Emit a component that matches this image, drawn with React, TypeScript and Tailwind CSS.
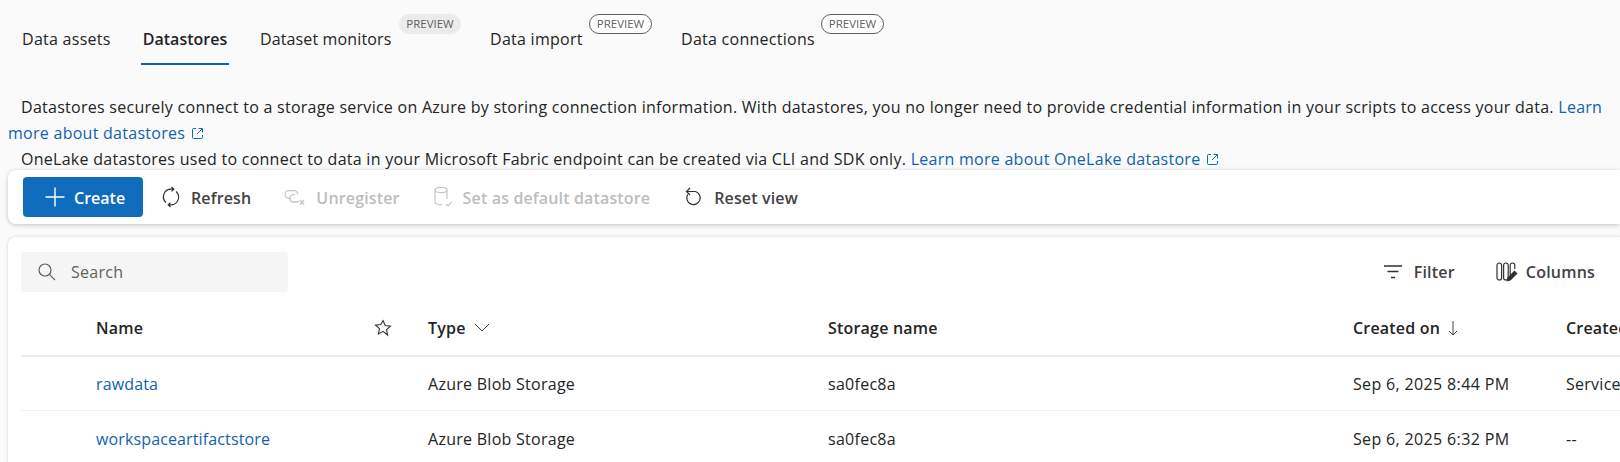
const font = "font-['Open_Sans','Noto_Sans',sans-serif]";

function PlusIcon() {
  return (
    <svg width="22" height="22" viewBox="0 0 22 22" fill="none" stroke="#fff" strokeWidth="1.4">
      <path d="M11 1.5v19M1.5 11h19" />
    </svg>
  );
}

function RefreshIcon() {
  return (
    <svg width="20" height="22" viewBox="0 0 20 22" fill="none" stroke="#323130" strokeWidth="1.2">
      <path d="M5 16.5A7.6 7.6 0 0 1 10 3.2h2.5M10.5 1l2.3 2.2-2.3 2.2" />
      <path d="M15 5.5A7.6 7.6 0 0 1 10 18.8H7.5M9.5 16.6l-2.3 2.2 2.3 2.2" />
    </svg>
  );
}

function UnregisterIcon() {
  return (
    <svg width="22" height="20" viewBox="0 0 22 20" fill="none" stroke="#c8c6c4" strokeWidth="1.3">
      <path d="M7 11.4H5a3.9 3.9 0 0 1 0-7.8h4.8a3.9 3.9 0 0 1 3.9 3.9" />
      <path d="M10.5 7.6H9.4a3.7 3.7 0 0 0 0 7.4h3.2c1 0 1.9-.4 2.6-1.1" />
      <path d="M16 13l4 4.5M20 13l-4 4.5" />
    </svg>
  );
}

function DatabaseCheckIcon() {
  return (
    <svg width="20" height="22" viewBox="0 0 20 22" fill="none" stroke="#c8c6c4" strokeWidth="1.2">
      <ellipse cx="8" cy="4" rx="6" ry="2.6" />
      <path d="M2 4v12c0 1.6 2.6 2.7 6 2.7h1M14 4v9" />
      <path d="M13 18l2 2 3.6-4" />
    </svg>
  );
}

function ResetIcon() {
  return (
    <svg width="20" height="20" viewBox="0 0 20 20" fill="none" stroke="#323130" strokeWidth="1.2">
      <path d="M3 4.5h8.5a6.7 6.7 0 1 1-7.8 3" />
      <path d="M6 1L2.5 4.5 6 8" />
    </svg>
  );
}

function SearchIcon() {
  return (
    <svg width="20" height="20" viewBox="0 0 20 20" fill="none" stroke="#605e5c" strokeWidth="1.2">
      <circle cx="8" cy="8" r="6" />
      <path d="M12.4 12.4l5.6 5.8" />
    </svg>
  );
}

function FilterIcon() {
  return (
    <svg width="18" height="14" viewBox="0 0 18 14" fill="none" stroke="#323130" strokeWidth="1.3">
      <path d="M0 1h18M3.5 6.5h11M7 12.5h4" />
    </svg>
  );
}

function ColumnsIcon() {
  return (
    <svg width="22" height="22" viewBox="0 0 22 22" fill="none" stroke="#323130" strokeWidth="1.2">
      <rect x="1" y="2" width="4.6" height="17" rx="2.3" />
      <rect x="7.6" y="2" width="4.6" height="17" rx="2.3" />
      <path d="M14.2 14V4.3a2.3 2.3 0 0 1 4.6 0V8" />
      <path d="M10.5 20.5l1-4 7-7 3 3-7 7z" fill="#323130" stroke="none" />
    </svg>
  );
}

function ExternalIcon() {
  return (
    <svg className="inline-block ml-1.5 align-[-1px]" width="13" height="13" viewBox="0 0 13 13" fill="none" stroke="#0f6cbd" strokeWidth="1">
      <path d="M5 1.5H2.5a1 1 0 0 0-1 1v8a1 1 0 0 0 1 1h8a1 1 0 0 0 1-1V8M7.5 1.5h4v4M11.3 1.7L6 7" />
    </svg>
  );
}

function StarIcon() {
  return (
    <svg width="18" height="18" viewBox="0 0 18 18" fill="none" stroke="#323130" strokeWidth="1.1">
      <path d="M9 1.6l2.2 4.9 5.3.6-4 3.6 1.1 5.3L9 12.3l-4.6 2.7 1.1-5.3-4-3.6 5.3-.6z" />
    </svg>
  );
}

function Preview({ filled }: { filled?: boolean }) {
  return (
    <span
      className={
        filled
          ? "ml-[7px] mt-[14px] h-5 w-[62px] flex items-center justify-center rounded-full bg-[#ebebeb] text-[11.5px] tracking-normal text-[#616161]"
          : "ml-[6px] mt-[14px] h-5 w-[63px] flex items-center justify-center rounded-full border border-[#616161] bg-white text-[11.5px] tracking-normal text-[#616161]"
      }
    >
      PREVIEW
    </span>
  );
}

function ToolButton({ icon, label, disabled, className }: { icon: React.ReactNode; label: string; disabled?: boolean; className?: string }) {
  return (
    <div className={`flex items-center gap-[10px] text-[16px] tracking-[0.15px] font-semibold ${disabled ? "text-[#bdbdbd]" : "text-[#424242]"} ${className ?? ""}`}>
      {icon}
      <span className="pt-px">{label}</span>
    </div>
  );
}

const columns = "grid grid-cols-[332px_400px_525px_213px_200px] pl-[75px] w-[1800px]";

function Row({ name, created, by, last, height }: { name: string; created: string; by: string; last?: boolean; height: string }) {
  return (
    <div className={`${columns} ${height} items-center ${last ? "" : "border-b border-[#f0f0f0]"}`}>
      <a className="text-[#1062b0] tracking-[0.13px]">{name}</a>
      <span>Azure Blob Storage</span>
      <span>sa0fec8a</span>
      <span className="tracking-[0.35px]">{created}</span>
      <span>{by}</span>
    </div>
  );
}

export default function App() {
  return (
    <div className={`${font} w-[1620px] h-[462px] overflow-hidden bg-[#fafafa] text-[16px] tracking-[0.27px] text-[#242424]`}>
      <nav className="flex items-start h-[65px]">
        <div className="ml-[22px] mt-[27px] w-[86px] whitespace-nowrap">Data assets</div>
        <div className="ml-[33px] h-[65px] pt-[27px] font-semibold border-b-2 border-[#115ea3] w-[88px] text-center tracking-normal">Datastores</div>
        <div className="ml-[31px] mt-[27px] w-[132px] whitespace-nowrap tracking-[0.13px]">Dataset monitors</div>
        <Preview filled />
        <div className="ml-[29px] mt-[27px] w-[93px] whitespace-nowrap">Data import</div>
        <Preview />
        <div className="ml-[29px] mt-[27px] w-[134px] whitespace-nowrap">Data connections</div>
        <Preview />
      </nav>

      <div className="pt-[29px] pl-[8px] leading-[26px] h-[105px] w-[1612px]">
        <p className="indent-[13px]">
          Datastores securely connect to a storage service on Azure by storing connection information. With datastores, you no longer need to provide credential information in your scripts to access your data.{" "}
          <a className="text-[#1062b0]">Learn more about datastores<ExternalIcon /></a>
        </p>
        <p className="pl-[13px]">
          OneLake datastores used to connect to data in your Microsoft Fabric endpoint can be created via CLI and SDK only.{" "}
          <a className="text-[#1062b0]">Learn more about OneLake datastore<ExternalIcon /></a>
        </p>
      </div>

      <div className="ml-[8px] h-[54px] rounded-l-lg bg-white shadow-[0_1px_4px_rgba(0,0,0,0.22)] flex items-center pl-[15px]">
        <div className="w-[120px] h-10 rounded bg-[#0f6cbd] text-white font-semibold tracking-normal flex items-center pl-[21px] gap-[8px]">
          <PlusIcon />
          <span className="pt-px">Create</span>
        </div>
        <ToolButton className="ml-[18px]" icon={<RefreshIcon />} label="Refresh" />
        <ToolButton className="ml-[33px]" disabled icon={<UnregisterIcon />} label="Unregister" />
        <ToolButton className="ml-[33px]" disabled icon={<DatabaseCheckIcon />} label="Set as default datastore" />
        <ToolButton className="ml-[34px]" icon={<ResetIcon />} label="Reset view" />
      </div>

      <div className="ml-[8px] mt-[13px] h-[240px] rounded-tl-lg bg-white shadow-[0_0_3px_rgba(0,0,0,0.18)] overflow-hidden">
        <div className="flex items-center justify-between mt-[15px] ml-[13px] h-10">
          <div className="w-[267px] h-10 rounded bg-[#f5f5f5] flex items-center pl-[16px] gap-[14px] text-[#616161]">
            <SearchIcon />
            <span>Search</span>
          </div>
          <div className="flex items-center mr-[25px] font-semibold text-[#424242] tracking-[0.2px]">
            <FilterIcon />
            <span className="ml-[12px]">Filter</span>
            <span className="ml-[41px]"><ColumnsIcon /></span>
            <span className="ml-[8px]">Columns</span>
          </div>
        </div>
        <div className="ml-[13px] overflow-hidden">
          <div className={`${columns} h-[65px] pt-[8px] items-center font-semibold tracking-[0.2px] border-b-2 border-[#ededed]`}>
            <div className="flex items-center justify-between pr-[36px]">
              <span>Name</span>
              <StarIcon />
            </div>
            <div className="flex items-center gap-2">
              <span>Type</span>
              <svg width="16" height="9" viewBox="0 0 16 9" fill="none" stroke="#424242" strokeWidth="1"><path d="M1 1l7 7 7-7" /></svg>
            </div>
            <span>Storage name</span>
            <div className="flex items-center gap-2">
              <span>Created on</span>
              <svg width="10" height="16" viewBox="0 0 10 16" fill="none" stroke="#424242" strokeWidth="1"><path d="M5 1v14M1 11l4 4 4-4" /></svg>
            </div>
            <span>Created by</span>
          </div>
          <Row height="h-[54px]" name="rawdata" created="Sep 6, 2025 8:44 PM" by="Service Principal" />
          <Row height="h-[55px]" name="workspaceartifactstore" created="Sep 6, 2025 6:32 PM" by="--" last />
        </div>
      </div>
    </div>
  );
}
